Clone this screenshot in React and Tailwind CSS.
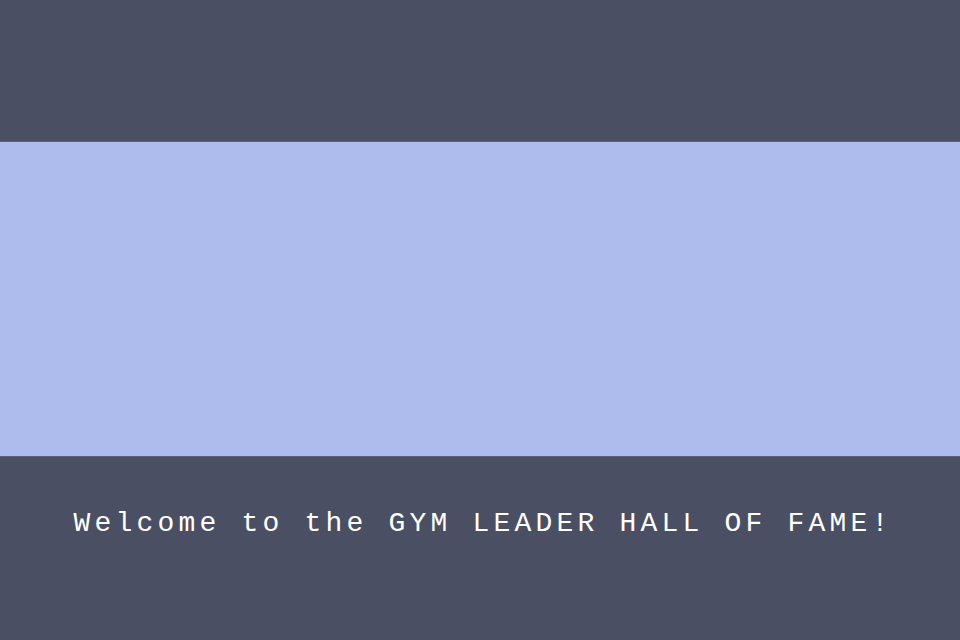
export default function App() {
  return (
    <div className="flex h-[640px] w-[960px] flex-col bg-[#4a4f63]">
      <div className="h-[142px] border-b border-[#5a6079]" />
      <div className="h-[314px] bg-[#adbbed]" />
      <div className="flex flex-1 justify-center border-t border-[#5a6079] pt-[53px] pl-[6px]">
        <p
          className="text-[28px] leading-none tracking-[4.2px] text-white"
          style={{ fontFamily: '"Liberation Mono", "DejaVu Sans Mono", monospace' }}
        >
          Welcome to the GYM LEADER HALL OF FAME!
        </p>
      </div>
    </div>
  );
}
